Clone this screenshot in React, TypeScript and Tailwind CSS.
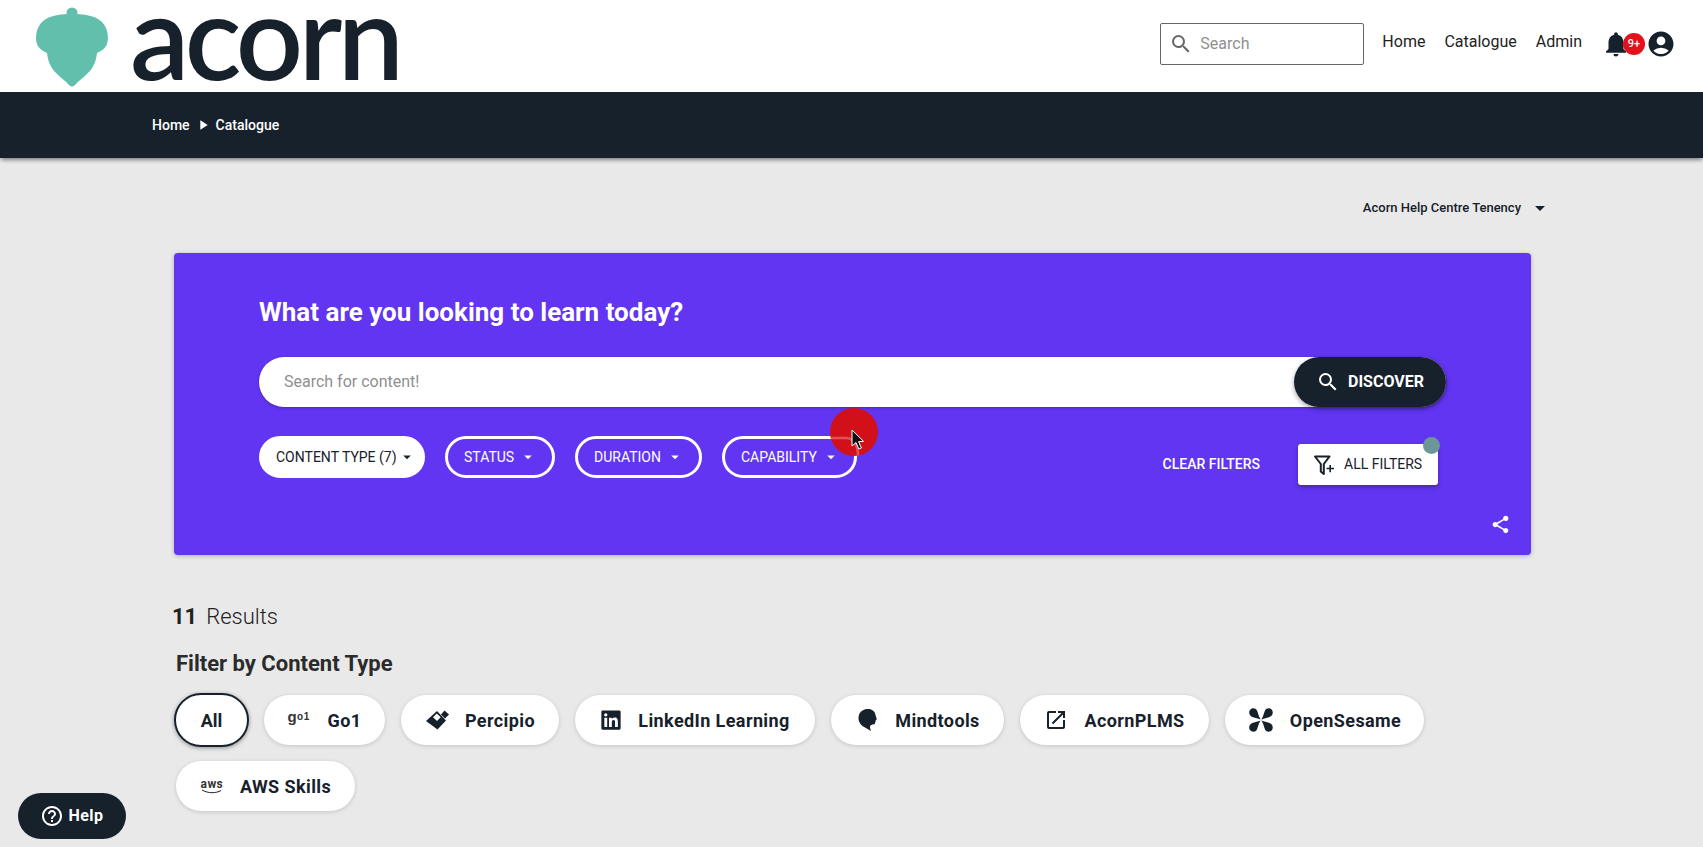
import React from 'react';
import { MdSearch, MdNotifications, MdAccountCircle, MdArrowDropDown, MdShare, MdOpenInNew, MdHelpOutline, MdPlayArrow } from 'react-icons/md';
import { FaLinkedin } from 'react-icons/fa';

function AcornMark() {
  return (
    <svg width="74" height="84" viewBox="0 0 74 84" className="-mt-[1px] shrink-0">
      <circle cx="37" cy="9" r="5.5" fill="#62bfac" />
      <path
        d="M37 10 C48 10 60 11 67 18 C73 24 74 34 72 40 C70 45 66 47 62 49 C61 58 58 64 53 69 C48 74 43 77 40 81 C38 83 36 83 34 81 C31 77 26 74 21 69 C16 64 13 58 12 49 C8 47 4 45 2 40 C0 34 1 24 7 18 C14 11 26 10 37 10 Z"
        fill="#62bfac"
      />
    </svg>
  );
}

function PercipioIcon() {
  return (
    <svg width="24" height="24" viewBox="0 0 24 24" fill="#17212b">
      <path d="M1 13 L12 3 L21 12.5 L12.5 21.5 Z M11.8 5.5 L8 9.3 L12 13 L15.7 9.3 Z" fillRule="evenodd" />
      <path d="M19.5 2.5 L24 6.5 L20 10.5 L16 6.5 Z" />
    </svg>
  );
}

function MindtoolsIcon() {
  return (
    <svg width="24" height="26" viewBox="0 0 24 26" fill="#17212b">
      <path d="M12 2 C16.5 1.5 20 4 20.5 8 C20.8 9.5 21.5 11 21.8 12 C21.8 12.8 20.8 12.8 20.6 13.4 C20.8 14.4 20.6 15 20 15.4 C20.3 16.4 19.8 17.2 18.8 17.2 C16.8 17.4 15.5 18 15 19.5 C15 21 15.6 22.6 16 24 C14 23 12 21.5 10 20.5 C6.5 19 3.5 15.5 3.5 11 C3.5 6 7 2.5 12 2 Z" />
    </svg>
  );
}

function OpenSesameIcon() {
  return (
    <svg width="26" height="26" viewBox="0 0 26 26" fill="#17212b">
      <path d="M12.6 12.4 C9.5 11.2 7.5 11 5 10.2 C1.5 9 0.3 5.6 2 3 C3.8 0.6 7.6 0.8 9 3.6 C10.2 6.2 10.5 9.4 12.6 12.4 Z" />
      <path d="M13.4 12.4 C16.5 11.2 18.5 11 21 10.2 C24.5 9 25.7 5.6 24 3 C22.2 0.6 18.4 0.8 17 3.6 C15.8 6.2 15.5 9.4 13.4 12.4 Z" />
      <path d="M12.6 13.6 C9.5 14.8 7.5 15 5 15.8 C1.5 17 0.3 20.4 2 23 C3.8 25.4 7.6 25.2 9 22.4 C10.2 19.8 10.5 16.6 12.6 13.6 Z" />
      <path d="M13.4 13.6 C16.5 14.8 18.5 15 21 15.8 C24.5 17 25.7 20.4 24 23 C22.2 25.4 18.4 25.2 17 22.4 C15.8 19.8 15.5 16.6 13.4 13.6 Z" />
    </svg>
  );
}

function FilterPlusIcon() {
  return (
    <svg width="22" height="22" viewBox="0 0 22 22" className="mr-[9px] shrink-0" fill="none" stroke="#17212b" strokeWidth="2">
      <path d="M2 2.5 H16.5 L10.8 10 V20 L7.8 17.5 V10 Z" strokeLinejoin="round" />
      <path d="M13.5 14.5 H21 M17.2 11 V18.2" strokeWidth="1.6" />
    </svg>
  );
}

function Go1Icon() {
  return (
    <span className="-mt-[7px] flex w-[24px] items-baseline font-['Liberation_Sans',sans-serif] text-[#333]">
      <span className="text-[15px] leading-none">g</span>
      <span className="-translate-y-[2px] text-[10px] leading-none tracking-[0.5px]">o1</span>
    </span>
  );
}

function AwsIcon() {
  return (
    <span className="flex w-[24px] flex-col items-center">
      <span className="text-[12px] leading-[10px] text-[#333]">aws</span>
      <svg width="22" height="5" viewBox="0 0 22 5">
        <path d="M1 1 C7 4.5 15 4.5 20 1.5" fill="none" stroke="#17212b" strokeWidth="1" />
      </svg>
    </span>
  );
}

function FilterPill({ label, active, className }: { label: string; active?: boolean; className: string }) {
  return (
    <button
      className={`flex h-[42px] items-center rounded-full border-[3px] border-white text-[14px] ${
        active ? 'bg-white text-[#17212b]' : 'text-white'
      } ${className}`}
    >
      <span>{label}</span>
      <MdArrowDropDown className={`text-[18px] ${active ? 'ml-[1px]' : 'ml-[5px]'}`} />
    </button>
  );
}

function SourceChip({ icon, label, className }: { icon?: React.ReactNode; label: string; className: string }) {
  return (
    <button
      className={`flex h-[50px] items-center justify-center gap-[16px] rounded-full bg-white text-[18px] font-bold tracking-[0.4px] text-[#17212b] shadow-[0_1px_4px_rgba(0,0,0,0.16)] ${className}`}
    >
      {icon}
      <span>{label}</span>
    </button>
  );
}

export default function App() {
  return (
    <div className="relative h-[847px] overflow-hidden bg-[#e9e9e9] font-['Roboto',sans-serif] text-[#17212b]">
      <header className="flex h-[92px] items-center bg-white pl-[35px] pr-[27px]">
        <AcornMark />
        <span className="ml-[21px] -mt-[22px] font-['Lato',sans-serif] text-[118px] leading-[68px] font-semibold tracking-[-4.5px] text-[#17212b]">acorn</span>
        <div className="ml-auto -mt-[4px] flex items-center">
          <div className="flex h-[42px] w-[204px] items-center rounded-[2px] border border-[#666] pl-[8px]">
            <MdSearch className="text-[24px] text-[#666]" />
            <span className="ml-[7px] text-[16px] text-[#8f8f8f]">Search</span>
          </div>
          <nav className="ml-[18px] flex -mt-[4px] gap-[19px] text-[16px] text-[#222]">
            <span>Home</span>
            <span>Catalogue</span>
            <span>Admin</span>
          </nav>
          <div className="relative ml-[19px] flex items-center">
            <MdNotifications className="text-[30px] text-[#17212b]" />
            <span className="ml-[-8px] flex h-[22px] w-[22px] items-center justify-center rounded-full bg-[#e2121c] text-[11px] font-medium text-white">9+</span>
            <MdAccountCircle className="ml-[1px] text-[30px] text-[#17212b]" />
          </div>
        </div>
      </header>

      <div className="flex h-[66px] items-center bg-[#17212b] pl-[152px] text-[14px] font-medium text-white shadow-[0_3px_4px_-1px_rgba(0,0,0,0.45)]">
        <span>Home</span>
        <MdPlayArrow className="mx-[5px] text-[16px]" />
        <span>Catalogue</span>
      </div>

      <main className="pl-[174px] pr-[172px]">
        <div className="-mr-[21px] flex h-[95px] items-start justify-end pt-[41px] text-[13px] font-medium text-[#17212b]">
          <span className="leading-[18px]">Acorn Help Centre Tenency</span>
          <MdArrowDropDown className="ml-[7px] text-[24px] -mt-[3px]" />
        </div>

        <section className="relative h-[302px] rounded-[4px] bg-[#6135f2] pl-[85px] pr-[85px] pt-[41px] shadow-[0_1px_4px_rgba(0,0,0,0.25)]">
          <h1 className="text-[26px] leading-[36px] font-bold text-white">What are you looking to learn today?</h1>
          <div className="mt-[27px] flex h-[50px] items-center rounded-full bg-white pl-[25px] shadow-[0_1px_3px_rgba(0,0,0,0.25)]">
            <span className="text-[16px] text-[#8f8f8f]">Search for content!</span>
            <button className="ml-auto flex h-[50px] w-[152px] items-center justify-center rounded-full bg-[#17212b] text-[16px] font-bold text-white shadow-[0_2px_5px_rgba(0,0,0,0.35)]">
              <MdSearch className="mr-[8px] text-[24px]" />
              DISCOVER
            </button>
          </div>
          <div className="mt-[29px] flex items-start">
            <FilterPill label="CONTENT TYPE (7)" active className="w-[166px] pl-[14px]" />
            <FilterPill label="STATUS" className="ml-[20px] w-[110px] pl-[16px]" />
            <FilterPill label="DURATION" className="ml-[20px] w-[127px] pl-[16px]" />
            <FilterPill label="CAPABILITY" className="ml-[20px] w-[135px] pl-[16px]" />
            <span className="ml-auto mr-[38px] mt-[20px] text-[14px] font-medium leading-[16px] text-white">CLEAR FILTERS</span>
            <button className="relative mr-[8px] mt-[8px] flex h-[41px] w-[140px] items-center rounded-[3px] bg-white pl-[15px] text-[14px] text-[#17212b] shadow-[0_2px_4px_rgba(0,0,0,0.3)]">
              <FilterPlusIcon />
              ALL FILTERS
              <span className="absolute -right-[2px] -top-[7px] h-[17px] w-[17px] rounded-full bg-[#6c9797]" />
            </button>
          </div>
          <MdShare className="absolute bottom-[20px] right-[20px] text-[21px] text-white" />
        </section>

        <div className="mt-[45px] -ml-[2px] flex items-baseline text-[22px] leading-[34px] text-[#222]">
          <span className="font-bold">11</span>
          <span className="ml-[9px] font-light">Results</span>
        </div>
        <h2 className="ml-[2px] mt-[16px] text-[22px] leading-[28px] font-bold text-[#2b2b2b]">Filter by Content Type</h2>
        <div className="ml-[2px] mt-[17px] flex flex-wrap gap-x-[16px] gap-y-[16px]">
          <button className="-my-[2px] -ml-[2px] -mr-[1px] flex h-[54px] w-[75px] items-center justify-center rounded-full border-2 border-[#17212b] bg-white text-[18px] font-bold text-[#17212b] shadow-[0_1px_4px_rgba(0,0,0,0.4)]">All</button>
          <SourceChip icon={<Go1Icon />} label="Go1" className="w-[121px]" />
          <SourceChip icon={<PercipioIcon />} label="Percipio" className="w-[158px]" />
          <SourceChip icon={<FaLinkedin className="text-[22px]" />} label="LinkedIn Learning" className="w-[240px]" />
          <SourceChip icon={<MindtoolsIcon />} label="Mindtools" className="w-[173px]" />
          <SourceChip icon={<MdOpenInNew className="text-[24px]" />} label="AcornPLMS" className="w-[189px]" />
          <SourceChip icon={<OpenSesameIcon />} label="OpenSesame" className="w-[199px]" />
          <SourceChip icon={<AwsIcon />} label="AWS Skills" className="w-[179px]" />
        </div>
      </main>

      <button className="absolute bottom-[8px] left-[18px] flex h-[46px] w-[108px] items-center justify-center rounded-full bg-[#17212b] text-[16px] font-bold tracking-[0.5px] text-white">
        <MdHelpOutline className="mr-[4px] text-[24px]" />
        Help
      </button>

      <div className="absolute left-[830px] top-[408px] h-[48px] w-[48px] overflow-hidden rounded-full bg-[#d2101a]">
        <svg width="48" height="48" viewBox="0 0 48 48" className="absolute left-0 top-0">
          <path d="M0 30 H16 C23 30 28 36 28 48" fill="none" stroke="#e4505a" strokeWidth="2.5" />
        </svg>
        <svg width="14" height="22" viewBox="0 0 14 22" className="absolute left-[21px] top-[21px]">
          <path d="M1 1 L1 17 L5 13.5 L7.8 20 L10.4 19 L7.6 12.6 L12.6 12.4 Z" fill="#111" stroke="#fff" strokeWidth="1" />
        </svg>
      </div>
    </div>
  );
}
